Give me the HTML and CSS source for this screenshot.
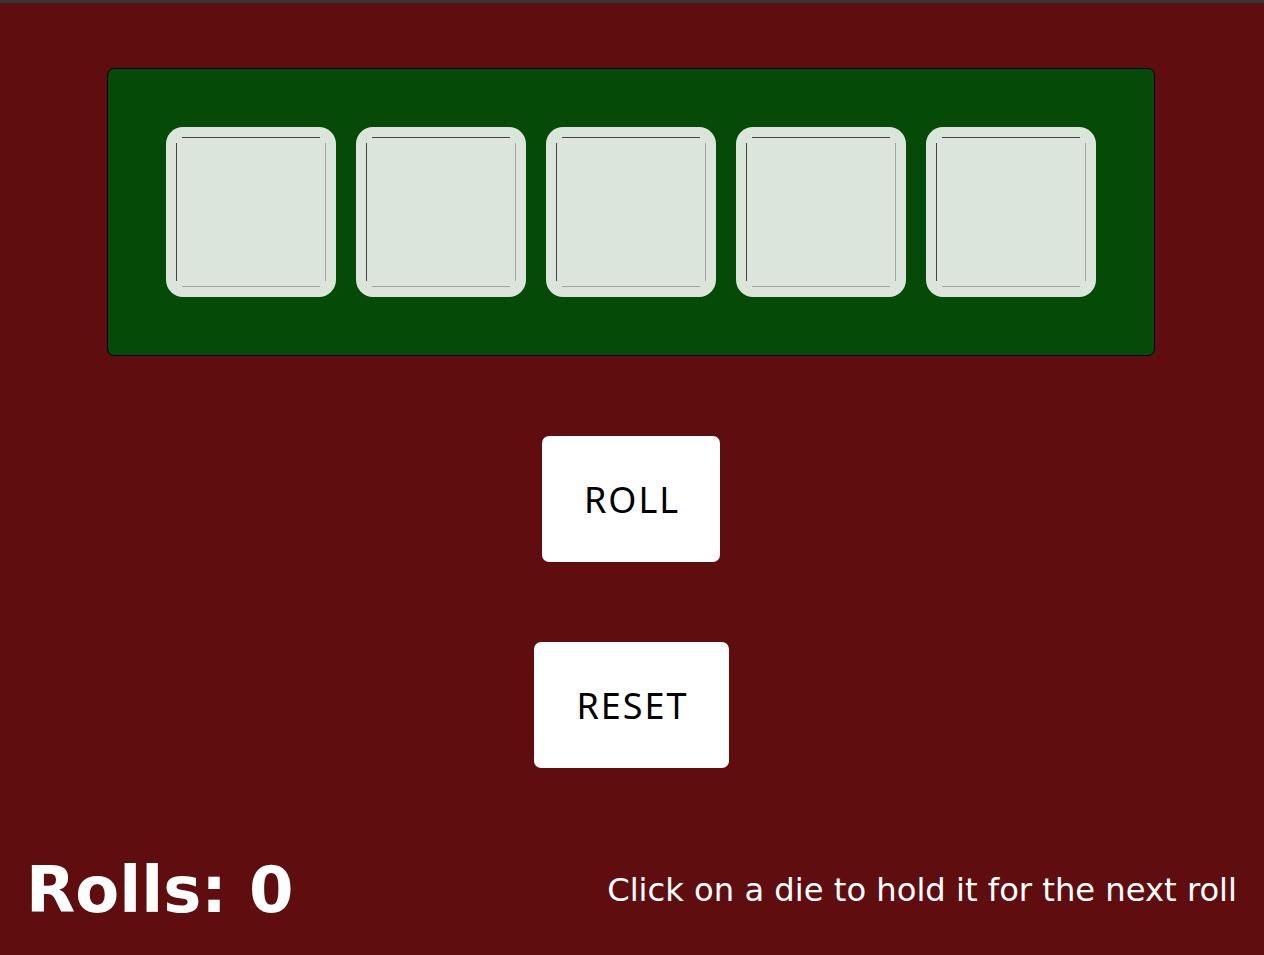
FILE: index.html
```html
<!DOCTYPE html>
<html lang="en">
<head>
<meta charset="utf-8">
<title>Dice</title>
<link rel="stylesheet" href="styles.css">
</head>
<body>
<div class="topbar"></div>
<main class="game">
  <section class="board">
    <div class="die"><div class="face"></div></div>
    <div class="die"><div class="face"></div></div>
    <div class="die"><div class="face"></div></div>
    <div class="die"><div class="face"></div></div>
    <div class="die"><div class="face"></div></div>
  </section>
  <button class="btn roll">ROLL</button>
  <button class="btn reset">RESET</button>
  <footer class="footer">
    <div class="rolls">Rolls: 0</div>
    <div class="hint">Click on a die to hold it for the next roll</div>
  </footer>
</main>
</body>
</html>
```

FILE: styles.css
```css
html, body {
  margin: 0;
  padding: 0;
}
body {
  background: #600d10;
  font-family: "DejaVu Sans", sans-serif;
  color: #fff;
  height: 955px;
  overflow: hidden;
}
.topbar {
  height: 3px;
  background: #363636;
}
.game {
  display: flex;
  flex-direction: column;
  align-items: center;
}
.board {
  margin: 65px 2px 0 0;
  width: 1046px;
  height: 285px;
  background: #064a07;
  border: 1px solid #000;
  border-radius: 7px;
  display: flex;
  justify-content: center;
  align-items: center;
  gap: 20px;
  padding-bottom: 1px;
  box-sizing: content-box;
}
.die {
  width: 170px;
  height: 170px;
  box-sizing: border-box;
  padding: 10px;
  background: #dce5dc;
  border-radius: 17px;
}
.face {
  width: 150px;
  height: 150px;
  background:
    linear-gradient(#454545, #454545) left 6px top 0 / calc(100% - 12px) 1px no-repeat,
    linear-gradient(#454545, #454545) left 0 top 6px / 1px calc(100% - 12px) no-repeat,
    linear-gradient(#a3a3a3, #a3a3a3) right 0 top 6px / 1px calc(100% - 12px) no-repeat,
    linear-gradient(#a3a3a3, #a3a3a3) left 6px bottom 0 / calc(100% - 12px) 1px no-repeat;
}
.btn {
  font-family: "Noto Sans", sans-serif;
  font-size: 36px;
  letter-spacing: 2px;
  text-indent: 2px;
  color: #000;
  background: #fff;
  border: none;
  border-radius: 7px;
  height: 126px;
  padding: 0;
  cursor: pointer;
}
.roll {
  margin-top: 80px;
  margin-right: 2px;
  width: 178px;
}
.reset {
  margin-top: 80px;
  width: 195px;
  margin-right: 1px;
}
.footer {
  margin-top: 85px;
  align-self: stretch;
  display: flex;
  justify-content: space-between;
  align-items: center;
  padding: 0 27px 0 26px;
}
.rolls {
  font-size: 64px;
  font-weight: bold;
}
.hint {
  font-size: 32.2px;
}
```
